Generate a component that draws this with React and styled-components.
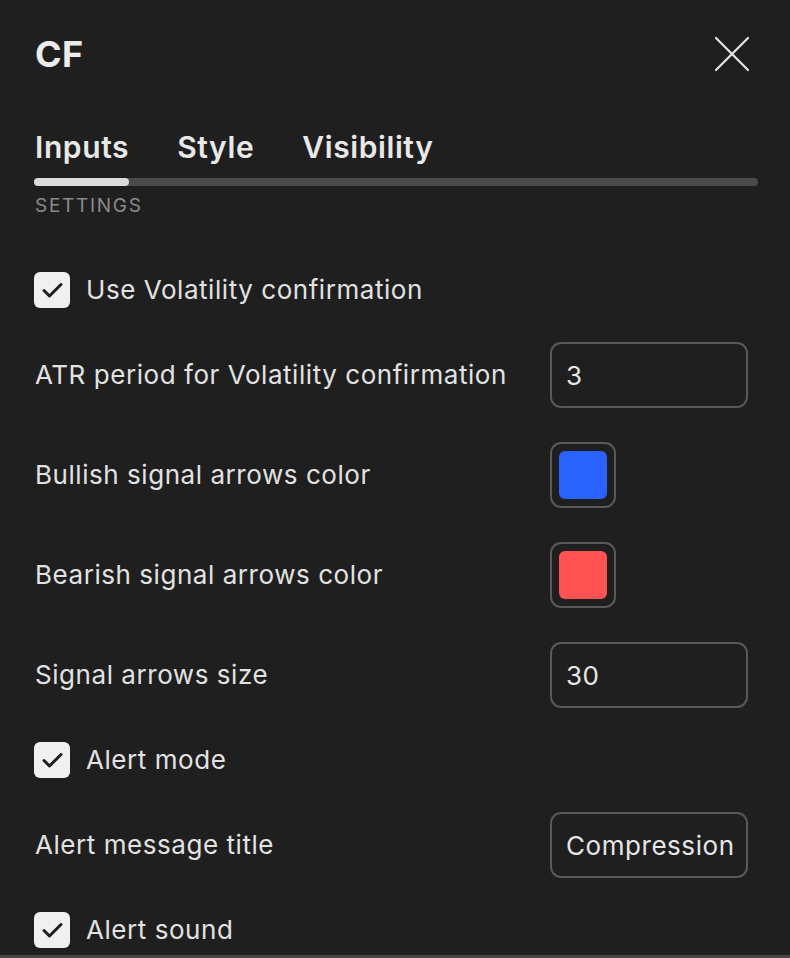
import React from 'react';
import styled, { createGlobalStyle } from 'styled-components';

const GlobalStyle = createGlobalStyle`
  html, body {
    margin: 0;
    padding: 0;
    background: #1f1f1f;
  }
  * {
    box-sizing: border-box;
  }
`;

// Panel shell
const Panel = styled.div`
  height: 958px;
  overflow: hidden;
  background: #1f1f1f;
  border-bottom: 3px solid #474747;
  padding: 32px 32px 0 34px;
  font-family: Inter, "Noto Sans", sans-serif;
  color: #e6e6e6;
`;

const Header = styled.header`
  display: flex;
  align-items: center;
  justify-content: space-between;
  height: 44px;
  padding-right: 8px;
`;

const Title = styled.h1`
  margin: 0 0 0 1px;
  font-size: 36px;
  font-weight: 650;
  line-height: 44px;
  letter-spacing: 0.3px;
  color: #ececec;
`;

const CloseButton = styled.button`
  width: 36px;
  height: 36px;
  padding: 0;
  border: none;
  background: none;
  display: flex;
  align-items: center;
  justify-content: center;
  cursor: pointer;
`;

// Tabs
const Tabs = styled.nav`
  display: flex;
  gap: 48px;
  margin-top: 53px;
  padding-left: 1px;
`;

const Tab = styled.span`
  font-size: 30px;
  font-weight: 600;
  line-height: 36px;
  letter-spacing: 0.6px;
  color: #e8e8e8;
`;

const Track = styled.div`
  margin-top: 13px;
  height: 8px;
  border-radius: 4px;
  background: #4b4b4b;
`;

const TrackFill = styled.div`
  width: 95px;
  height: 100%;
  border-radius: 4px;
  background: #dadada;
`;

const SectionLabel = styled.div`
  margin-top: 9px;
  padding-left: 1px;
  font-size: 19px;
  line-height: 22px;
  letter-spacing: 1.7px;
  color: #8b8b8b;
`;

// Settings list
const List = styled.div`
  display: flex;
  flex-direction: column;
  gap: 34px;
  margin-top: 55px;
  padding-right: 10px;
`;

const Row = styled.div`
  display: flex;
  align-items: center;
  justify-content: space-between;
  min-height: 36px;
`;

const CheckRow = styled.label`
  display: flex;
  align-items: center;
  gap: 15px;
  height: 36px;
`;

const Box = styled.span`
  width: 36px;
  height: 36px;
  border-radius: 6px;
  background: #f0f0f0;
  display: flex;
  align-items: center;
  justify-content: center;
`;

const Label = styled.span`
  padding-left: 1px;
  font-size: 26px;
  line-height: 32px;
  letter-spacing: 0.55px;
  color: #e2e2e2;
`;

const TextInput = styled.div`
  width: 198px;
  height: 66px;
  border: 2px solid #595959;
  border-radius: 11px;
  padding: 0 0 0 14px;
  display: flex;
  align-items: center;
  font-size: 26px;
  letter-spacing: 0.55px;
  color: #e6e6e6;
  overflow: hidden;
  white-space: nowrap;
`;

const SwatchFrame = styled.div`
  width: 66px;
  height: 66px;
  margin-right: 132px;
  border: 2px solid #595959;
  border-radius: 11px;
  display: flex;
  align-items: center;
  justify-content: center;
`;

const Swatch = styled.div`
  width: 48px;
  height: 48px;
  border-radius: 6px;
  background: ${(p) => p.$color};
`;

const CloseIcon = () => (
  <svg width="36" height="36" viewBox="0 0 36 36">
    <path d="M2 2 L34 34 M34 2 L2 34" stroke="#e6e6e6" strokeWidth="2.2" strokeLinecap="round" />
  </svg>
);

const Check = () => (
  <svg width="36" height="36" viewBox="0 0 36 36">
    <path d="M10 18.5 L15.5 24 L27 12.5" fill="none" stroke="#1f1f1f" strokeWidth="3" strokeLinecap="round" strokeLinejoin="round" />
  </svg>
);

const Checkbox = ({ label }) => (
  <CheckRow>
    <Box>
      <Check />
    </Box>
    <Label>{label}</Label>
  </CheckRow>
);

const App = () => {
  return (
    <>
      <GlobalStyle />
      <Panel>
        <Header>
          <Title>CF</Title>
          <CloseButton aria-label="Close">
            <CloseIcon />
          </CloseButton>
        </Header>

        <Tabs>
          <Tab>Inputs</Tab>
          <Tab>Style</Tab>
          <Tab>Visibility</Tab>
        </Tabs>
        <Track>
          <TrackFill />
        </Track>
        <SectionLabel>SETTINGS</SectionLabel>

        <List>
          <Checkbox label="Use Volatility confirmation" />
          <Row>
            <Label>ATR period for Volatility confirmation</Label>
            <TextInput>3</TextInput>
          </Row>
          <Row>
            <Label>Bullish signal arrows color</Label>
            <SwatchFrame>
              <Swatch $color="#2962ff" />
            </SwatchFrame>
          </Row>
          <Row>
            <Label>Bearish signal arrows color</Label>
            <SwatchFrame>
              <Swatch $color="#ff5252" />
            </SwatchFrame>
          </Row>
          <Row>
            <Label>Signal arrows size</Label>
            <TextInput>30</TextInput>
          </Row>
          <Checkbox label="Alert mode" />
          <Row>
            <Label>Alert message title</Label>
            <TextInput>Compression</TextInput>
          </Row>
          <Checkbox label="Alert sound" />
        </List>
      </Panel>
    </>
  );
};

export default App;
